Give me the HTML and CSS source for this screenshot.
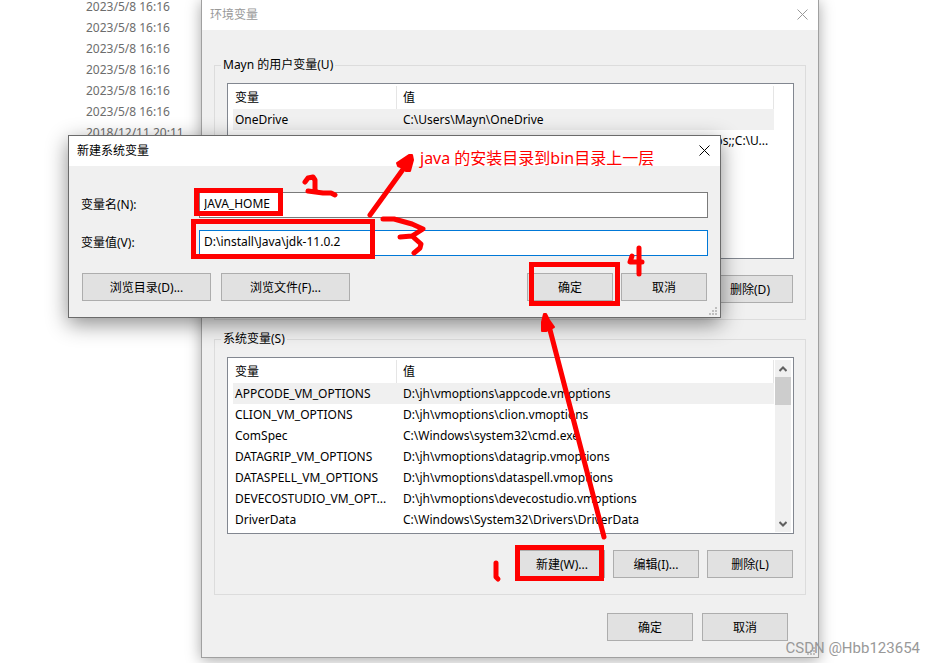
FILE: index.html
```
<!DOCTYPE html>
<html lang="zh-CN">

<head>
    <meta charset="UTF-8">
    <title>环境变量</title>
    <link rel="stylesheet" href="styles.css">
</head>

<body>
    <ul class="dates">
        <li>2023/5/8 16:16</li>
        <li>2023/5/8 16:16</li>
        <li>2023/5/8 16:16</li>
        <li>2023/5/8 16:16</li>
        <li>2023/5/8 16:16</li>
        <li>2023/5/8 16:16</li>
        <li>2018/12/11 20:11</li>
    </ul>

    <section class="window env">
        <header class="titlebar">
            <h1>环境变量</h1>
            <button class="close" aria-label="关闭"><svg width="11" height="11" viewBox="0 0 11 11"><path d="M0.5 0.5L10.5 10.5M10.5 0.5L0.5 10.5" /></svg></button>
        </header>
        <div class="env_body">
            <fieldset>
                <legend>Mayn 的用户变量(U)</legend>
                <div class="list">
                    <table>
                        <thead>
                            <tr><th class="name">变量</th><th>值</th></tr>
                        </thead>
                        <tbody>
                            <tr class="valgt"><td>OneDrive</td><td>C:\Users\Mayn\OneDrive</td></tr>
                            <tr><td>Path</td><td>%USERPROFILE%\AppData\Local\Microsoft\WindowsApps;;C:\U...</td></tr>
                        </tbody>
                    </table>
                    <div class="gutter"></div>
                </div>
                <div class="buttons">
                    <button class="btn">新建(N)...</button>
                    <button class="btn">编辑(E)...</button>
                    <button class="btn">删除(D)</button>
                </div>
            </fieldset>

            <fieldset>
                <legend>系统变量(S)</legend>
                <div class="list system">
                    <table>
                        <thead>
                            <tr><th class="name">变量</th><th>值</th></tr>
                        </thead>
                        <tbody>
                            <tr class="valgt"><td>APPCODE_VM_OPTIONS</td><td>D:\jh\vmoptions\appcode.vmoptions</td></tr>
                            <tr><td>CLION_VM_OPTIONS</td><td>D:\jh\vmoptions\clion.vmoptions</td></tr>
                            <tr><td>ComSpec</td><td>C:\Windows\system32\cmd.exe</td></tr>
                            <tr><td>DATAGRIP_VM_OPTIONS</td><td>D:\jh\vmoptions\datagrip.vmoptions</td></tr>
                            <tr><td>DATASPELL_VM_OPTIONS</td><td>D:\jh\vmoptions\dataspell.vmoptions</td></tr>
                            <tr><td>DEVECOSTUDIO_VM_OPT...</td><td>D:\jh\vmoptions\devecostudio.vmoptions</td></tr>
                            <tr><td>DriverData</td><td>C:\Windows\System32\Drivers\DriverData</td></tr>
                        </tbody>
                    </table>
                    <div class="gutter scrollbar">
                        <button aria-label="向上"><svg width="8" height="6" viewBox="0 0 8 6"><path d="M0.5 5L4 1.5L7.5 5" /></svg></button>
                        <div class="thumb"></div>
                        <button class="down" aria-label="向下"><svg width="8" height="6" viewBox="0 0 8 6"><path d="M0.5 1L4 4.5L7.5 1" /></svg></button>
                    </div>
                </div>
                <div class="buttons">
                    <button class="btn">新建(W)...</button>
                    <button class="btn">编辑(I)...</button>
                    <button class="btn">删除(L)</button>
                </div>
            </fieldset>

            <div class="buttons confirm">
                <button class="btn">确定</button>
                <button class="btn">取消</button>
            </div>
        </div>
        <svg class="grip" width="8" height="8" viewBox="0 0 8 8"><path d="M6 0h2v2h-2zM3 3h2v2h-2zM6 3h2v2h-2zM0 6h2v2h-2zM3 6h2v2h-2zM6 6h2v2h-2z" /></svg>
    </section>

    <section class="window dialog">
        <header class="titlebar">
            <h2>新建系统变量</h2>
            <button class="close" aria-label="关闭"><svg width="11" height="11" viewBox="0 0 11 11"><path d="M0.5 0.5L10.5 10.5M10.5 0.5L0.5 10.5" /></svg></button>
        </header>
        <form class="dialog_body">
            <div class="fields">
                <label for="varname">变量名(N):</label>
                <input type="text" id="varname" value="JAVA_HOME">
                <label for="varvalue">变量值(V):</label>
                <input type="text" id="varvalue" class="active" value="D:\install\Java\jdk-11.0.2">
            </div>
            <div class="buttons">
                <button type="button" class="btn wide">浏览目录(D)...</button>
                <button type="button" class="btn wide">浏览文件(F)...</button>
                <button type="button" class="btn ok">确定</button>
                <button type="button" class="btn">取消</button>
            </div>
        </form>
        <svg class="grip" width="8" height="8" viewBox="0 0 8 8"><path d="M6 0h2v2h-2zM3 3h2v2h-2zM6 3h2v2h-2zM0 6h2v2h-2zM3 6h2v2h-2zM6 6h2v2h-2z" /></svg>
    </section>

    <!-- red pen marks -->
    <svg class="marks" width="935" height="663" viewBox="0 0 935 663">
        <rect x="196.500" y="190.500" width="84" height="23" />
        <rect x="193.500" y="221.500" width="179" height="35" />
        <rect x="531.500" y="264.500" width="86" height="39" />
        <rect x="517.500" y="547.500" width="84" height="31" />
        <g class="pen">
            <path d="M370 215L404 168" />
            <path d="M604 537L549 326" />
            <path d="M305 182L308 178L313 177L315 180L315 190M308 191L323 193L331 193L335 195" />
            <path d="M383 219L394 219L412 224L423 229L412 236L400 237M412 236L421 244L420 248L414 253" />
            <path d="M632 256L630 262L642 262M639 248V274" />
            <path d="M496 563L496 577L498 579" />
        </g>
        <path class="head" d="M412 155L409 155L397 163L398 166L403 168L406 171L410 171L413 160Z" />
        <path class="head" d="M544 314L542 322L542 331L546 331L554 327L549 320L546 314Z" />
    </svg>
    <p class="note">java 的安装目录到bin目录上一层</p>
    <p class="watermark">CSDN @Hbb123654</p>
</body>

</html>
```
FILE: styles.css
```
* {
    box-sizing: border-box;
}

html {
    height: 100%;
    overflow: hidden;
}

body {
    position: relative;
    height: 100%;
    margin: 0;
    overflow: hidden;
    background: white;
    color: black;
    font-family: "Noto Sans", "Noto Sans CJK SC", sans-serif;
    font-size: 12px;
}

button,
input {
    font-family: inherit;
    font-size: 12px;
    color: black;
}

.dates {
    list-style: none;
    margin: -4px 0 0 86px;
    padding: 0;
    line-height: 21px;
    color: #6d6d6d;
}

/* windows */

.window {
    position: absolute;
    background: #f0f0f0;
}

.env {
    top: 0;
    left: 201px;
    width: 618px;
    border: 1px solid #a0a0a0;
    border-top: 0;
    box-shadow: 0 2px 14px rgba(0, 0, 0, 0.35);
}

.dialog {
    top: 135px;
    left: 68px;
    width: 653px;
    border: 1px solid #6b6b6b;
    box-shadow: 0 6px 20px rgba(0, 0, 0, 0.45);
}

.titlebar {
    display: flex;
    justify-content: space-between;
    align-items: center;
    height: 30px;
    padding: 0 10px 2px 8px;
    background: white;
}

.titlebar h1,
.titlebar h2 {
    margin: 0;
    font-size: 12px;
    font-weight: normal;
}

.env h1 {
    color: #999;
}

.close {
    display: flex;
    padding: 0;
    border: 0;
    background: none;
}

.close path {
    stroke: black;
    fill: none;
}

.env .close path {
    stroke: #999;
}

.grip {
    position: absolute;
    right: 3px;
    bottom: 2px;
    fill: #bfbfbf;
}

/* variable lists */

.env_body {
    padding: 27px 12px 16px;
}

fieldset {
    min-width: 0;
    margin: 0 0 11px;
    padding: 10px 11px 16px 12px;
    border: 1px solid #dcdcdc;
}

legend {
    margin-left: -6px;
    padding: 0 2px;
    line-height: 16px;
}

.list {
    display: flex;
    height: 176px;
    padding: 2px 2px 1px 5px;
    border: 1px solid #828790;
    background: white;
}

.system {
    height: 177px;
}

table {
    flex: 1;
    align-self: flex-start;
    table-layout: fixed;
    width: 100%;
    border-collapse: separate;
    border-spacing: 0;
}

th,
td {
    height: 21px;
    padding: 0 0 0 6px;
    line-height: 21px;
    text-align: left;
    font-weight: normal;
    white-space: nowrap;
}

th {
    height: 23px;
    border-right: 1px solid #e5e5e5;
}

th.name {
    width: 164px;
}

th:first-child,
td:first-child {
    padding-left: 2px;
}

.valgt td {
    background: #f0f0f0;
}

.gutter {
    flex: none;
    width: 17px;
}

.scrollbar {
    display: flex;
    flex-direction: column;
    border-left: 1px solid white;
    background: #f0f0f0;
}

.scrollbar button {
    display: flex;
    justify-content: center;
    align-items: center;
    height: 17px;
    padding: 0;
    border: 0;
    background: none;
}

.scrollbar path {
    fill: none;
    stroke: #606060;
    stroke-width: 2;
}

.scrollbar .down {
    margin-top: auto;
}

.thumb {
    height: 28px;
    background: #cdcdcd;
}

/* buttons */

.buttons {
    display: flex;
    justify-content: flex-end;
    gap: 8px;
    margin-top: 16px;
    padding-right: 1px;
}

.confirm {
    gap: 9px;
    margin-top: 18px;
    padding-right: 18px;
}

.btn {
    width: 86px;
    height: 28px;
    padding: 0;
    border: 1px solid #adadad;
    background: #e1e1e1;
    text-align: center;
}

.wide {
    width: 129px;
}

.ok {
    margin-left: auto;
}

/* new variable dialog */

.dialog_body {
    padding: 26px 12px 16px;
}

.fields {
    display: grid;
    grid-template-columns: 118px 1fr;
    row-gap: 12px;
    align-items: center;
}

.fields label {
    padding-bottom: 2px;
}

.fields input {
    height: 26px;
    padding: 0 4px 3px;
    border: 1px solid #7a7a7a;
    outline: 0;
    background: white;
}

.fields .active {
    border-color: #0078d7;
}

.dialog .buttons {
    margin-top: 17px;
    padding-left: 1px;
}

.dialog .wide + .wide {
    margin-left: 2px;
}

/* pen marks and texts on top */

.marks {
    position: absolute;
    top: 0;
    left: 0;
    pointer-events: none;
}

.marks rect {
    fill: none;
    stroke: red;
    stroke-width: 5;
}

.pen {
    fill: none;
    stroke: red;
    stroke-width: 5;
    stroke-linecap: round;
    stroke-linejoin: round;
}

.head {
    fill: red;
    stroke: red;
    stroke-width: 2;
    stroke-linejoin: round;
}

.note {
    position: absolute;
    top: 148px;
    left: 420px;
    margin: 0;
    line-height: 20px;
    font-size: 16px;
    color: red;
    white-space: nowrap;
}

.watermark {
    position: absolute;
    right: 15px;
    bottom: 6px;
    margin: 0;
    line-height: 18px;
    font-family: Roboto, sans-serif;
    font-size: 15px;
    color: #999;
}
```
